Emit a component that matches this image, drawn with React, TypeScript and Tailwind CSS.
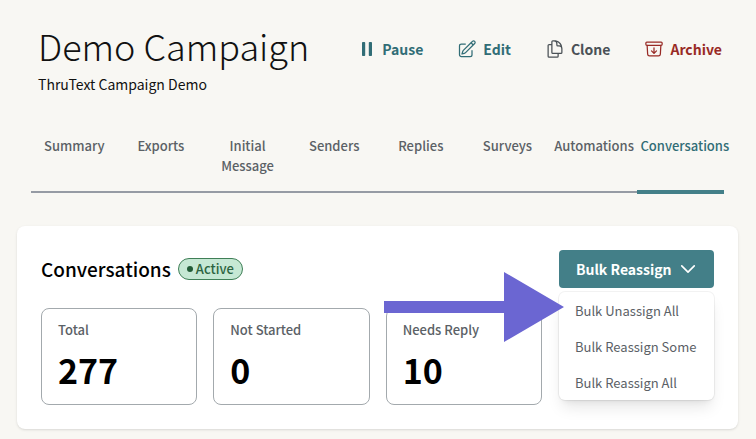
import type { ReactNode } from "react";
import {
  HiOutlineArchiveBoxArrowDown,
  HiOutlineChevronDown,
  HiOutlineDocumentDuplicate,
  HiOutlinePencilSquare,
} from "react-icons/hi2";

const tabs = [
  "Summary",
  "Exports",
  "Initial Message",
  "Senders",
  "Replies",
  "Surveys",
  "Automations",
  "Conversations",
];

const stats = [
  { label: "Total", value: "277" },
  { label: "Not Started", value: "0" },
  { label: "Needs Reply", value: "10" },
];

const menuItems = ["Bulk Unassign All", "Bulk Reassign Some", "Bulk Reassign All"];

function PauseIcon() {
  return (
    <svg viewBox="0 0 16 14" className="h-[14px] w-4" fill="currentColor" aria-hidden="true">
      <rect x="2" y="0" width="3.2" height="14" rx="0.8" />
      <rect x="8.8" y="0" width="3.2" height="14" rx="0.8" />
    </svg>
  );
}

function Action({ icon, label, tone }: { icon: ReactNode; label: string; tone: string }) {
  return (
    <button type="button" className={`flex items-center gap-1.5 text-sm leading-5 font-bold ${tone}`}>
      {icon}
      {label}
    </button>
  );
}

function Stat({ label, value }: { label: string; value: string }) {
  return (
    <div className="min-w-0 flex-1 rounded-lg border border-[#a3a9ad] px-4 pt-[11px] pb-2">
      <dt className="text-[13px] leading-5 font-medium text-[#5b6166]">{label}</dt>
      <dd className="mt-1 text-[34px] leading-[52px] font-bold text-black">{value}</dd>
    </div>
  );
}

export default function App() {
  return (
    <div className="min-h-screen bg-[#f8f7f3] font-['Noto_Sans_CJK_SC',sans-serif] text-[#111]">
      <header className="flex items-start justify-between pt-[21px] pr-[34px] pl-[38px]">
        <div>
          <h1 className="text-[36px] leading-[48px] font-light">Demo Campaign</h1>
          <p className="mt-[3px] text-sm leading-6">ThruText Campaign Demo</p>
        </div>
        <div className="mt-[18px] flex items-center gap-[34px]">
          <Action icon={<PauseIcon />} label="Pause" tone="text-[#316d76]" />
          <Action icon={<HiOutlinePencilSquare className="size-5" />} label="Edit" tone="text-[#316d76]" />
          <Action icon={<HiOutlineDocumentDuplicate className="size-5" />} label="Clone" tone="text-[#4a5156]" />
          <Action icon={<HiOutlineArchiveBoxArrowDown className="size-5" />} label="Archive" tone="text-[#982a25]" />
        </div>
      </header>

      <nav className="mt-9 mr-8 ml-[31px] flex">
        {tabs.map((tab) => (
          <a
            key={tab}
            href="#"
            aria-current={tab === "Conversations" ? "page" : undefined}
            className={
              tab === "Conversations"
                ? "min-w-0 flex-1 basis-0 border-b-4 border-[#437f88] px-[3px] pt-1 pb-[14px] text-[13px] leading-5 font-medium whitespace-nowrap text-[#316d76]"
                : "mb-px min-w-0 flex-1 basis-0 border-b-2 border-[#969ba4] px-[3px] pt-1 pb-[15px] text-center text-[13px] leading-5 font-medium text-[#5b6166]"
            }
          >
            {tab}
          </a>
        ))}
      </nav>

      <main className="mt-8 mr-[18px] ml-[17px] rounded-lg bg-white p-6 shadow-sm">
        <div className="flex items-center justify-between">
          <div className="flex items-center gap-[7px]">
            <h2 className="text-[19px] leading-6 font-medium text-black">Conversations</h2>
            <span className="flex h-[22px] items-center gap-[3px] rounded-full border border-[#3f7f57] bg-[#c6e8d4] px-2 text-[13px] leading-5 font-medium text-[#2c6440]">
              <span className="size-[6px] rounded-full bg-[#225c37]" />
              Active
            </span>
          </div>
          <div className="relative w-[155px]">
            <button
              type="button"
              aria-expanded="true"
              className="flex h-[38px] w-full items-center justify-between rounded-[4px] bg-[#437f88] pr-4 pl-[17px] text-sm leading-5 font-bold text-white"
            >
              Bulk Reassign
              <HiOutlineChevronDown className="size-5 stroke-2" />
            </button>
            <div className="absolute top-full right-0 left-0 mt-1 rounded-md bg-white shadow-lg ring-1 ring-black/5">
              {menuItems.map((item) => (
                <button
                  key={item}
                  type="button"
                  className="block h-9 w-full px-4 pt-px text-left text-[13px] leading-5 text-[#5b6166]"
                >
                  {item}
                </button>
              ))}
            </div>
          </div>
        </div>

        <div className="relative mt-5 mr-[172px]">
          <dl className="flex gap-4">
            {stats.map((stat) => (
              <Stat key={stat.label} label={stat.label} value={stat.value} />
            ))}
          </dl>
          <svg
            viewBox="0 0 180 70"
            className="absolute -top-9 -right-[22px] h-[70px] w-[180px]"
            fill="#6b66d2"
            aria-hidden="true"
          >
            <path d="M0 29H120V0L180 35L120 70V41H0Z" />
          </svg>
        </div>
      </main>
    </div>
  );
}
